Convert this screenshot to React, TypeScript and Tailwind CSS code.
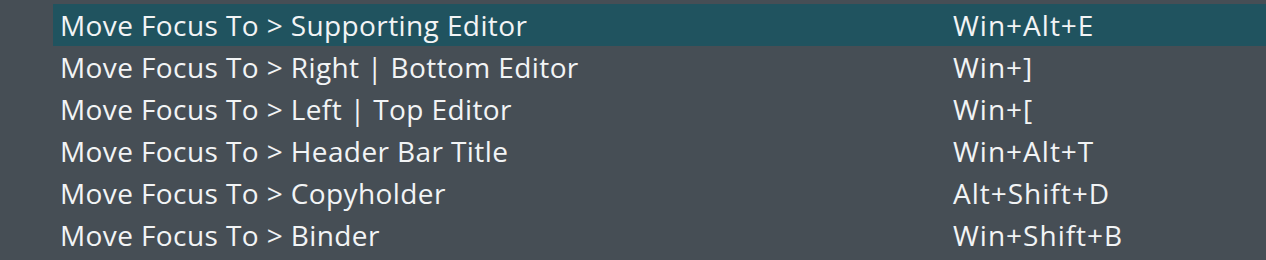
const rows = [
  { name: 'Move Focus To > Supporting Editor', keys: 'Win+Alt+E', active: true },
  { name: 'Move Focus To > Right | Bottom Editor', keys: 'Win+]' },
  { name: 'Move Focus To > Left | Top Editor', keys: 'Win+[' },
  { name: 'Move Focus To > Header Bar Title', keys: 'Win+Alt+T' },
  { name: 'Move Focus To > Copyholder', keys: 'Alt+Shift+D' },
  { name: 'Move Focus To > Binder', keys: 'Win+Shift+B' },
];

export default function App() {
  return (
    <div className="h-[260px] w-[1266px] overflow-hidden bg-[#464e55] pt-[4px] pl-[53px] text-[28px] text-[#f2f4f5] font-['Open_Sans','Noto_Sans',sans-serif]">
      {rows.map((row) => (
        <div
          key={row.name}
          className={`flex h-[42px] items-center pl-[7px] leading-none ${row.active ? 'bg-[#20535f]' : ''}`}
        >
          <span className="w-[893px] whitespace-nowrap tracking-[0.4px]">{row.name}</span>
          <span className="whitespace-nowrap tracking-[1px]">{row.keys}</span>
        </div>
      ))}
    </div>
  );
}
